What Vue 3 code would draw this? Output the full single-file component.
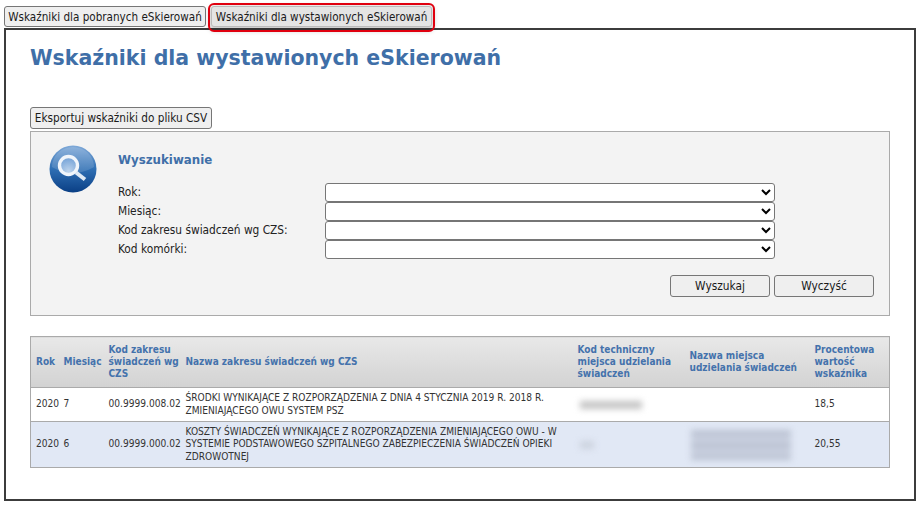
<script setup>
const fields = ['Rok:', 'Miesiąc:', 'Kod zakresu świadczeń wg CZS:', 'Kod komórki:']
</script>

<template>
  <div class="page">
    <div class="tabs">
      <button class="tab">Wskaźniki dla pobranych eSkierowań</button>
      <button class="tab active">Wskaźniki dla wystawionych eSkierowań</button>
    </div>
    <main class="panel">
      <h1>Wskaźniki dla wystawionych eSkierowań</h1>
      <button class="export">Eksportuj wskaźniki do pliku CSV</button>
      <section class="search">
        <svg class="icon" viewBox="0 0 48 48" width="48" height="48">
          <defs>
            <linearGradient id="ballFill" x1="0" y1="0" x2="0" y2="1">
              <stop offset="0" stop-color="#7fa9d8" />
              <stop offset="0.5" stop-color="#2f6fb4" />
              <stop offset="1" stop-color="#0a3f85" />
            </linearGradient>
            <radialGradient id="lens" cx="0.5" cy="0.8" r="0.8">
              <stop offset="0" stop-color="#bcd3ec" />
              <stop offset="1" stop-color="#6f9fd6" />
            </radialGradient>
          </defs>
          <circle cx="24" cy="24" r="23.5" fill="url(#ballFill)" />
          <path d="M3 22a21 20 0 0 1 42 0c-7 4-14 6-21 6s-14-2-21-6z" fill="#fff" opacity=".14" />
          <circle cx="19.5" cy="20.5" r="9" fill="url(#lens)" stroke="#f0f5fb" stroke-width="3.4" />
          <path d="M27 27.5l9 7" stroke="#dfe9f4" stroke-width="4" stroke-linecap="butt" />
        </svg>
        <div class="search-body">
          <h2>Wyszukiwanie</h2>
          <div class="fields">
            <template v-for="f in fields" :key="f">
              <label>{{ f }}</label>
              <select></select>
            </template>
          </div>
          <div class="actions">
            <button>Wyszukaj</button>
            <button>Wyczyść</button>
          </div>
        </div>
      </section>
      <table>
        <colgroup>
          <col style="width:28px" /><col style="width:45px" /><col style="width:77px" />
          <col style="width:392px" /><col style="width:112px" /><col style="width:125px" /><col />
        </colgroup>
        <thead>
          <tr>
            <th>Rok</th>
            <th>Miesiąc</th>
            <th>Kod zakresu<br />świadczeń wg<br />CZS</th>
            <th>Nazwa zakresu świadczeń wg CZS</th>
            <th>Kod techniczny<br />miejsca udzielania<br />świadczeń</th>
            <th>Nazwa miejsca<br />udzielania świadczeń</th>
            <th>Procentowa<br />wartość<br />wskaźnika</th>
          </tr>
        </thead>
        <tbody>
          <tr>
            <td>2020</td>
            <td>7</td>
            <td>00.9999.008.02</td>
            <td>ŚRODKI WYNIKAJĄCE Z ROZPORZĄDZENIA Z DNIA 4 STYCZNIA 2019 R. 2018 R.<br />ZMIENIAJĄCEGO OWU SYSTEM PSZ</td>
            <td><span class="blur b1"></span></td>
            <td></td>
            <td>18,5</td>
          </tr>
          <tr class="alt">
            <td>2020</td>
            <td>6</td>
            <td>00.9999.000.02</td>
            <td>KOSZTY ŚWIADCZEŃ WYNIKAJĄCE Z ROZPORZĄDZENIA ZMIENIAJĄCEGO OWU - W<br />SYSTEMIE PODSTAWOWEGO SZPITALNEGO ZABEZPIECZENIA ŚWIADCZEŃ OPIEKI<br />ZDROWOTNEJ</td>
            <td><span class="blur b2"></span></td>
            <td><span class="blur b3"></span></td>
            <td>20,55</td>
          </tr>
        </tbody>
      </table>
    </main>
  </div>
</template>

<style>
html, body { margin: 0; background: #fff; }
</style>

<style scoped>
.page {
  width: 919px;
  height: 507px;
  box-sizing: border-box;
  padding: 6px 3px 0 4px;
  font-family: "DejaVu Sans Condensed", "Noto Sans", sans-serif;
  font-size: 11.8px;
  color: #222;
  overflow: hidden;
}
button {
  font: inherit;
  color: #1a1a1a;
  background: #efefef;
  border: 1px solid #767676;
  border-radius: 3px;
  padding: 0;
  white-space: nowrap;
}
.export { font-size: 11.7px; }
.tabs { display: flex; gap: 5px; height: 22px; }
.tab { width: 202px; height: 21px; font-size: 11.6px; }
.tab.active {
  width: 221px;
  background: #e4e4e4;
  border-color: #bbb;
  position: relative;
  z-index: 1;
  box-shadow: 0 2px 5px 2px rgba(0, 0, 0, .2);
}
.tab.active::after {
  content: "";
  position: absolute;
  inset: -4px -4px -6px -4px;
  border: 2px solid #e0000f;
  border-radius: 6px;
}
.panel {
  box-sizing: border-box;
  width: 912px;
  height: 473px;
  border: 2px solid #3c3c3c;
  padding: 0 24px;
  background: #fff;
}
h1 {
  margin: 14px 0 0;
  height: 28px;
  font: bold 20.5px/28px "DejaVu Sans", Verdana, sans-serif;
  color: #3f6fa8;
  white-space: nowrap;
}
.export { display: block; width: 182px; height: 22px; margin-top: 35px; }
.search {
  box-sizing: border-box;
  width: 860px;
  height: 185px;
  margin-top: 2px;
  display: flex;
  background: #f3f3f3;
  border: 1px solid #aaa;
  padding: 13px 15px 0 18px;
}
.icon { flex: none; margin-right: 21px; }
.search-body { flex: 1; }
h2 {
  margin: 7px 0 0;
  font: bold 11.8px/16px "DejaVu Sans", Verdana, sans-serif;
  color: #3f6fa8;
}
.fields {
  display: grid;
  grid-template-columns: 207px 450px;
  grid-auto-rows: 19px;
  margin-top: 15px;
  align-items: center;
}
label { line-height: 19px; }
select {
  box-sizing: border-box;
  width: 450px;
  height: 19px;
  background: #fff;
  border: 1px solid #767676;
  border-radius: 3px;
  font: inherit;
}
.actions {
  display: flex;
  justify-content: flex-end;
  gap: 4px;
  margin-top: 16px;
}
.actions button { width: 100px; height: 22px; }
table {
  box-sizing: border-box;
  width: 860px;
  margin-top: 20px;
  border-collapse: collapse;
  table-layout: fixed;
  border: 1px solid #aaa;
}
th {
  height: 50px;
  padding: 0 0 0 5px;
  text-align: left;
  font: bold 10px/12px "DejaVu Sans Condensed", Verdana, sans-serif;
  color: #4472ac;
  background: linear-gradient(#e8e8e8, #d2d2d2);
  white-space: nowrap;
}
thead tr { border-bottom: 1px solid #aaa; }
td {
  padding: 0 0 0 5px;
  font-size: 10.1px;
  line-height: 12.5px;
  height: 33px;
  white-space: nowrap;
  color: #333;
}
tr.alt { border-top: 1px solid #aaa; background: #e1e8f5; }
tr.alt td { height: 45px; }
.blur {
  display: block;
  filter: blur(3px);
}
.b1 { width: 62px; height: 8px; margin-left: 2px; background: #c4c4c4; }
.b2 { width: 14px; height: 8px; margin-left: 2px; background: #cdd3df; }
.b3 {
  width: 100px;
  height: 30px;
  margin-left: 1px;
  background: repeating-linear-gradient(#bcc3d3 0 7px, #cdd4e3 7px 12px);
}
</style>
